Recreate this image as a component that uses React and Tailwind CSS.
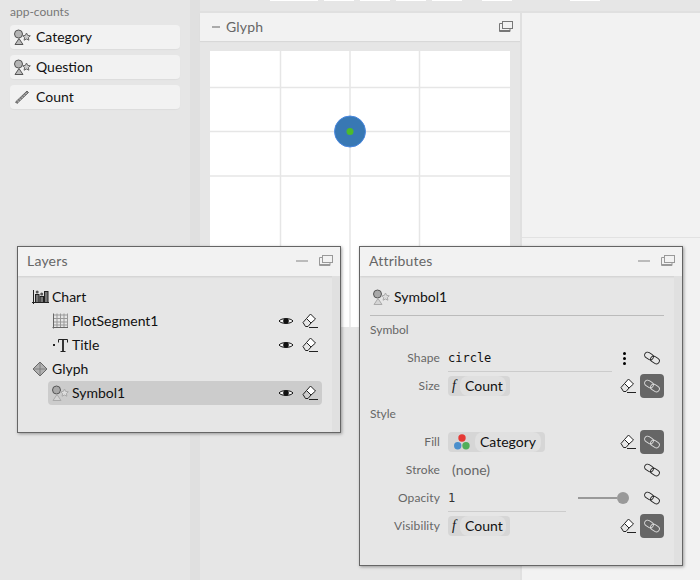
const ShapesIcon = ({ light }) => (
  <svg width="18" height="18" viewBox="0 0 18 18" className="shrink-0">
    <circle cx="5.5" cy="6" r="4" fill={light ? "#a8a8a8" : "#b5b5b5"} stroke="#555" strokeWidth="1" />
    <path d="M6 10.5 L10 16.5 L2 16.5 Z" fill={light ? "#d5d5d5" : "#bbb"} stroke={light ? "#aaa" : "#555"} strokeWidth="1" />
    <path d="M13.5 5 L14.7 7.4 L17.3 7.8 L15.4 9.6 L15.9 12.2 L13.5 11 L11.1 12.2 L11.6 9.6 L9.7 7.8 L12.3 7.4 Z" fill={light ? "#ddd" : "#ccc"} stroke={light ? "#aaa" : "#666"} strokeWidth="1" />
  </svg>
);

const RulerIcon = () => (
  <svg width="16" height="16" viewBox="0 0 16 16" className="shrink-0">
    <path d="M1.5 13 L13 2 L14.5 3.5 L3 14.5 Z" fill="#888" stroke="#444" strokeWidth="0.7" />
    <path d="M3.5 11.5 L4.7 12.7 M5.5 9.6 L6.7 10.8 M7.5 7.7 L8.7 8.9 M9.5 5.8 L10.7 7 M11.5 3.9 L12.7 5.1" stroke="#ddd" strokeWidth="0.7" />
  </svg>
);

const ChartIcon = () => (
  <svg width="17" height="16" viewBox="0 0 17 16" className="shrink-0" fill="none" stroke="#222" strokeWidth="1">
    <path d="M1.5 1 V15 M0 13.5 H17" />
    <rect x="3.5" y="5.5" width="3.5" height="8" fill="#777" />
    <rect x="8" y="7.5" width="3.5" height="6" fill="#777" />
    <rect x="12.5" y="2.5" width="3.5" height="11" fill="#777" />
    <circle cx="5.2" cy="3" r="1.5" fill="#555" stroke="none" />
    <circle cx="9.7" cy="5" r="1.5" fill="#555" stroke="none" />
  </svg>
);

const GridIcon = () => (
  <svg width="16" height="16" viewBox="0 0 16 16" className="shrink-0" fill="none">
    <path d="M1.5 0.5 V15.5 M0.5 14.5 H16" stroke="#666" strokeWidth="1" />
    <path d="M5 0.5 V14 M8.5 0.5 V14 M12 0.5 V14 M15.5 0.5 V14 M2 2 H16 M2 5.5 H16 M2 9 H16 M2 12 H16" stroke="#999" strokeWidth="1" />
  </svg>
);

const TitleIcon = () => (
  <svg width="16" height="16" viewBox="0 0 16 16" className="shrink-0" fill="none" stroke="#222">
    <rect x="1" y="7" width="2" height="2" fill="#222" stroke="none" />
    <path d="M6.5 5.5 V2.5 H15.5 V5.5" strokeWidth="1" />
    <path d="M11 2.5 V14" strokeWidth="1.8" />
    <path d="M8.5 14.5 H13.5" strokeWidth="1" />
  </svg>
);

const GlyphIcon = () => (
  <svg width="16" height="16" viewBox="0 0 16 16" className="shrink-0">
    <path d="M8 1 L15 8 L8 15 L1 8 Z" fill="#b0b0b0" stroke="#666" strokeWidth="1" />
    <path d="M8 1 V15 M1 8 H15" stroke="#777" strokeWidth="0.8" />
  </svg>
);

const EyeIcon = () => (
  <svg width="16" height="16" viewBox="0 0 16 16" className="shrink-0">
    <path d="M1 8 C3.5 4.8 12.5 4.8 15 8 C12.5 11.2 3.5 11.2 1 8 Z" fill="#f4f4f4" stroke="#111" strokeWidth="1" />
    <circle cx="8" cy="8" r="2.8" fill="#111" />
  </svg>
);

const EraserIcon = () => (
  <svg width="16" height="16" viewBox="0 0 16 16" className="shrink-0" fill="none" stroke="#222" strokeWidth="1">
    <path d="M8.5 1 L13.5 6 L9 10 L4.5 5.5 Z" fill="#fff" />
    <path d="M4.5 5.5 L1 9.5 L3.5 13.5 L6 13.5 L9 10" />
    <path d="M7 14.5 H16" />
  </svg>
);

const LinkIcon = ({ white }) => (
  <svg width="16" height="16" viewBox="0 0 16 16" className="shrink-0" fill="none" stroke={white ? "#dddddd" : "#222"} strokeWidth="0.9">
    <rect x="0.4" y="3" width="9.2" height="6" rx="3" transform="rotate(32 5 6)" />
    <rect x="6.4" y="7" width="9.2" height="6" rx="3" transform="rotate(32 11 10)" />
  </svg>
);

const WindowButtons = () => (
  <div className="flex items-center gap-[11px]">
    <div className="w-3 h-[2px] bg-[#bbbbbb]" />
    <svg width="14" height="12" viewBox="0 0 14 12" fill="none" stroke="#999" strokeWidth="1">
      <rect x="3.5" y="0.5" width="10" height="7" />
      <path d="M3.5 2.5 H0.5 V10.5 H11 V7.5" />
      <path d="M0.5 9.5 H11" />
    </svg>
  </div>
);

const Field = ({ icon, label }) => (
  <div className="h-6 flex items-center gap-[6px] pl-1 bg-[#f2f2f2] rounded-sm shadow-[0_1px_1px_rgba(0,0,0,0.04)] text-sm text-[#111]">
    <span className="w-4 flex justify-center">{icon}</span>
    {label}
  </div>
);

const Layer = ({ icon, label, selected, indent, tools }) => (
  <div className={`h-6 flex items-center rounded-sm pr-1 ${indent ? "ml-4 pl-1" : "pl-0"} ${selected ? "bg-[#cccccc]" : ""}`}>
    <span className="w-4 flex justify-center">{icon}</span>
    <span className="ml-1 text-sm text-[#111] flex-1">{label}</span>
    {tools && (
      <span className="flex gap-2">
        <EyeIcon />
        <EraserIcon />
      </span>
    )}
  </div>
);

const Chip = ({ kind, label, width }) => (
  <div className={`h-5 ${width} flex items-center bg-[#d6d6d6] rounded-sm pr-1`}>
    {kind === "f" ? (
      <span className="w-3 text-center font-['Liberation_Serif',serif] italic text-sm text-[#111]">f</span>
    ) : (
      <svg width="27" height="20" viewBox="0 0 27 20" className="shrink-0">
        <circle cx="14" cy="6" r="3.7" fill="#e53935" />
        <circle cx="9.7" cy="13.7" r="3.7" fill="#4a8fcc" />
        <circle cx="18" cy="13.7" r="3.7" fill="#4fae5a" />
      </svg>
    )}
    <span className="flex-1 h-5 flex items-center pl-[5px] bg-[#e0e0e0] rounded-[8px] text-sm text-[#111]">{label}</span>
  </div>
);

const AttrRow = ({ label, children, eraser, link = true, active, more }) => (
  <div className="h-7 flex items-center">
    <span className="w-[70px] text-right text-xs tracking-[0.1px] text-[#666] shrink-0">{label}</span>
    <div className="ml-2 flex-1 min-w-0 h-full flex items-center">{children}</div>
    {more && (
      <span className="ml-1 w-4 flex flex-col items-center gap-[2px] mr-2">
        <i className="size-[3px] rounded-full bg-black" />
        <i className="size-[3px] rounded-full bg-black" />
        <i className="size-[3px] rounded-full bg-black" />
      </span>
    )}
    {eraser && <span className="mr-1"><EraserIcon /></span>}
    <span className={`size-6 flex items-center justify-center rounded-sm shrink-0 ${active ? "bg-[#666666]" : ""}`}>
      <LinkIcon white={active} />
    </span>
  </div>
);

const Win = ({ title, className, children }) => (
  <div className={`absolute flex flex-col border border-[#666666] bg-[#e6e6e6] shadow-[1px_1px_3px_rgba(0,0,0,0.35)] ${className}`}>
    <div className="h-[29px] shrink-0 flex items-center justify-between pl-[9px] pr-[7px] pb-[1px] bg-[#f2f2f2] shadow-[0_1px_2px_rgba(0,0,0,0.1)] text-sm tracking-[0.2px] text-[#666]">
      {title}
      <WindowButtons />
    </div>
    <div className="flex-1 flex min-h-0">
      <div className="flex-1 min-w-0">{children}</div>
      <div className="w-2 bg-[#e0e0e0]" />
    </div>
  </div>
);

export default function App() {
  return (
    <div className="relative w-[700px] h-[580px] overflow-hidden flex bg-[#e6e6e6] font-['Lato','Liberation_Sans',sans-serif]">
      <aside className="w-[190px] shrink-0 px-[10px] pt-[5px]">
        <div className="h-[14px] flex items-center text-xs text-[#777]">app-counts</div>
        <div className="mt-[6px] flex flex-col gap-[6px]">
          <Field icon={<ShapesIcon />} label="Category" />
          <Field icon={<ShapesIcon />} label="Question" />
          <Field icon={<RulerIcon />} label="Count" />
        </div>
      </aside>
      <div className="w-[10px] shrink-0 bg-[#e0e0e0]" />
      <main className="flex-1 min-w-0 flex flex-col">
        <div className="h-[13px] shrink-0 border-b-2 border-[#e0e0e0] flex items-start pl-[70px]">
          <div className="w-12 h-[1px] bg-white" />
          <div className="ml-[6px] w-[30px] h-[1px] bg-white" />
          <div className="ml-[6px] w-[30px] h-[1px] bg-white" />
          <div className="ml-[6px] w-[30px] h-[1px] bg-white" />
          <div className="ml-[6px] w-[30px] h-[1px] bg-white" />
          <div className="ml-5 w-[30px] h-[1px] bg-white" />
          <div className="ml-[58px] w-[30px] h-[1px] bg-white" />
        </div>
        <div className="flex-1 flex min-h-0">
          <section className="w-[320px] shrink-0 bg-[#e6e6e6]">
            <div className="h-[28px] flex items-center justify-between pl-3 pr-[7px] bg-[#f2f2f2] shadow-[0_1px_1px_rgba(0,0,0,0.06)] text-sm tracking-[0.2px] text-[#666]">
              <span className="flex items-center gap-[6px]">
                <span className="w-2 h-[2px] bg-[#aaaaaa]" />
                Glyph
              </span>
              <svg width="14" height="12" viewBox="0 0 14 12" fill="none" stroke="#777" strokeWidth="1">
                <rect x="3.5" y="0.5" width="10" height="7" />
                <path d="M3.5 2.5 H0.5 V10.5 H11 V7.5" />
                <path d="M0.5 9.5 H11" />
              </svg>
            </div>
            <div className="pt-[10px] pl-[10px]">
              <svg width="300" height="276" viewBox="0 0 300 276" className="block bg-white">
                <g stroke="#e6e6e6" strokeWidth="1.5">
                  <path d="M70.5 0 V276 M140 0 V276 M209.5 0 V276" />
                  <path d="M0 36.5 H300 M0 80.5 H300 M0 125 H300" />
                </g>
                <circle cx="140" cy="80.5" r="15.5" fill="#3878b4" stroke="#4a88e0" strokeWidth="1" />
                <circle cx="140" cy="80.5" r="3.5" fill="#4cbb2c" />
              </svg>
            </div>
          </section>
          <div className="w-[2px] shrink-0 bg-[#e0e0e0]" />
          <section className="flex-1 min-w-0 bg-[#f2f2f2] flex flex-col">
            <div className="h-[225px] shrink-0 border-b border-[#e2e2e2]" />
          </section>
        </div>
      </main>

      <Win title="Layers" className="left-[17px] top-[246px] w-[324px] h-[187px]">
        <div className="pt-[9px] pl-[14px] pr-[10px]">
          <Layer icon={<ChartIcon />} label="Chart" />
          <Layer indent icon={<GridIcon />} label="PlotSegment1" tools />
          <Layer indent icon={<TitleIcon />} label="Title" tools />
          <Layer icon={<GlyphIcon />} label="Glyph" />
          <Layer indent selected icon={<ShapesIcon light />} label="Symbol1" tools />
        </div>
      </Win>

      <Win title="Attributes" className="left-[359px] top-[246px] w-[324px] h-[320px]">
        <div className="pt-[9px] pl-[10px] pr-[10px]">
          <div className="h-6 flex items-center gap-1 pl-[2px] text-sm text-[#111]">
            <ShapesIcon light />
            Symbol1
          </div>
          <div className="mt-[6px] h-[1px] bg-[#bbbbbb]" />
          <div className="mt-[7px] h-[14px] flex items-center text-xs text-[#666]">Symbol</div>
          <div className="mt-[7px]">
            <AttrRow label="Shape" more>
              <div className="w-full h-full flex items-center border-b border-[#cccccc] font-['DejaVu_Sans_Mono',monospace] text-xs text-[#111]">circle</div>
            </AttrRow>
            <AttrRow label="Size" eraser active>
              <Chip kind="f" label="Count" width="w-[62px]" />
            </AttrRow>
          </div>
          <div className="mt-[7px] h-[14px] flex items-center text-xs text-[#666]">Style</div>
          <div className="mt-[7px]">
            <AttrRow label="Fill" eraser active>
              <Chip kind="c" label="Category" width="w-[97px]" />
            </AttrRow>
            <AttrRow label="Stroke">
              <span className="pl-[4px] text-sm text-[#666]">(none)</span>
            </AttrRow>
            <AttrRow label="Opacity">
              <div className="flex-1 h-full flex items-center border-b border-[#cccccc] font-['DejaVu_Sans_Mono',monospace] text-xs text-[#333]">1</div>
              <div className="ml-3 w-[51px] flex items-center mr-[11px]">
                <div className="flex-1 h-[2px] bg-[#999999]" />
                <div className="size-3 rounded-full bg-[#999999]" />
              </div>
            </AttrRow>
            <AttrRow label="Visibility" eraser active>
              <Chip kind="f" label="Count" width="w-[62px]" />
            </AttrRow>
          </div>
        </div>
      </Win>
    </div>
  );
}
